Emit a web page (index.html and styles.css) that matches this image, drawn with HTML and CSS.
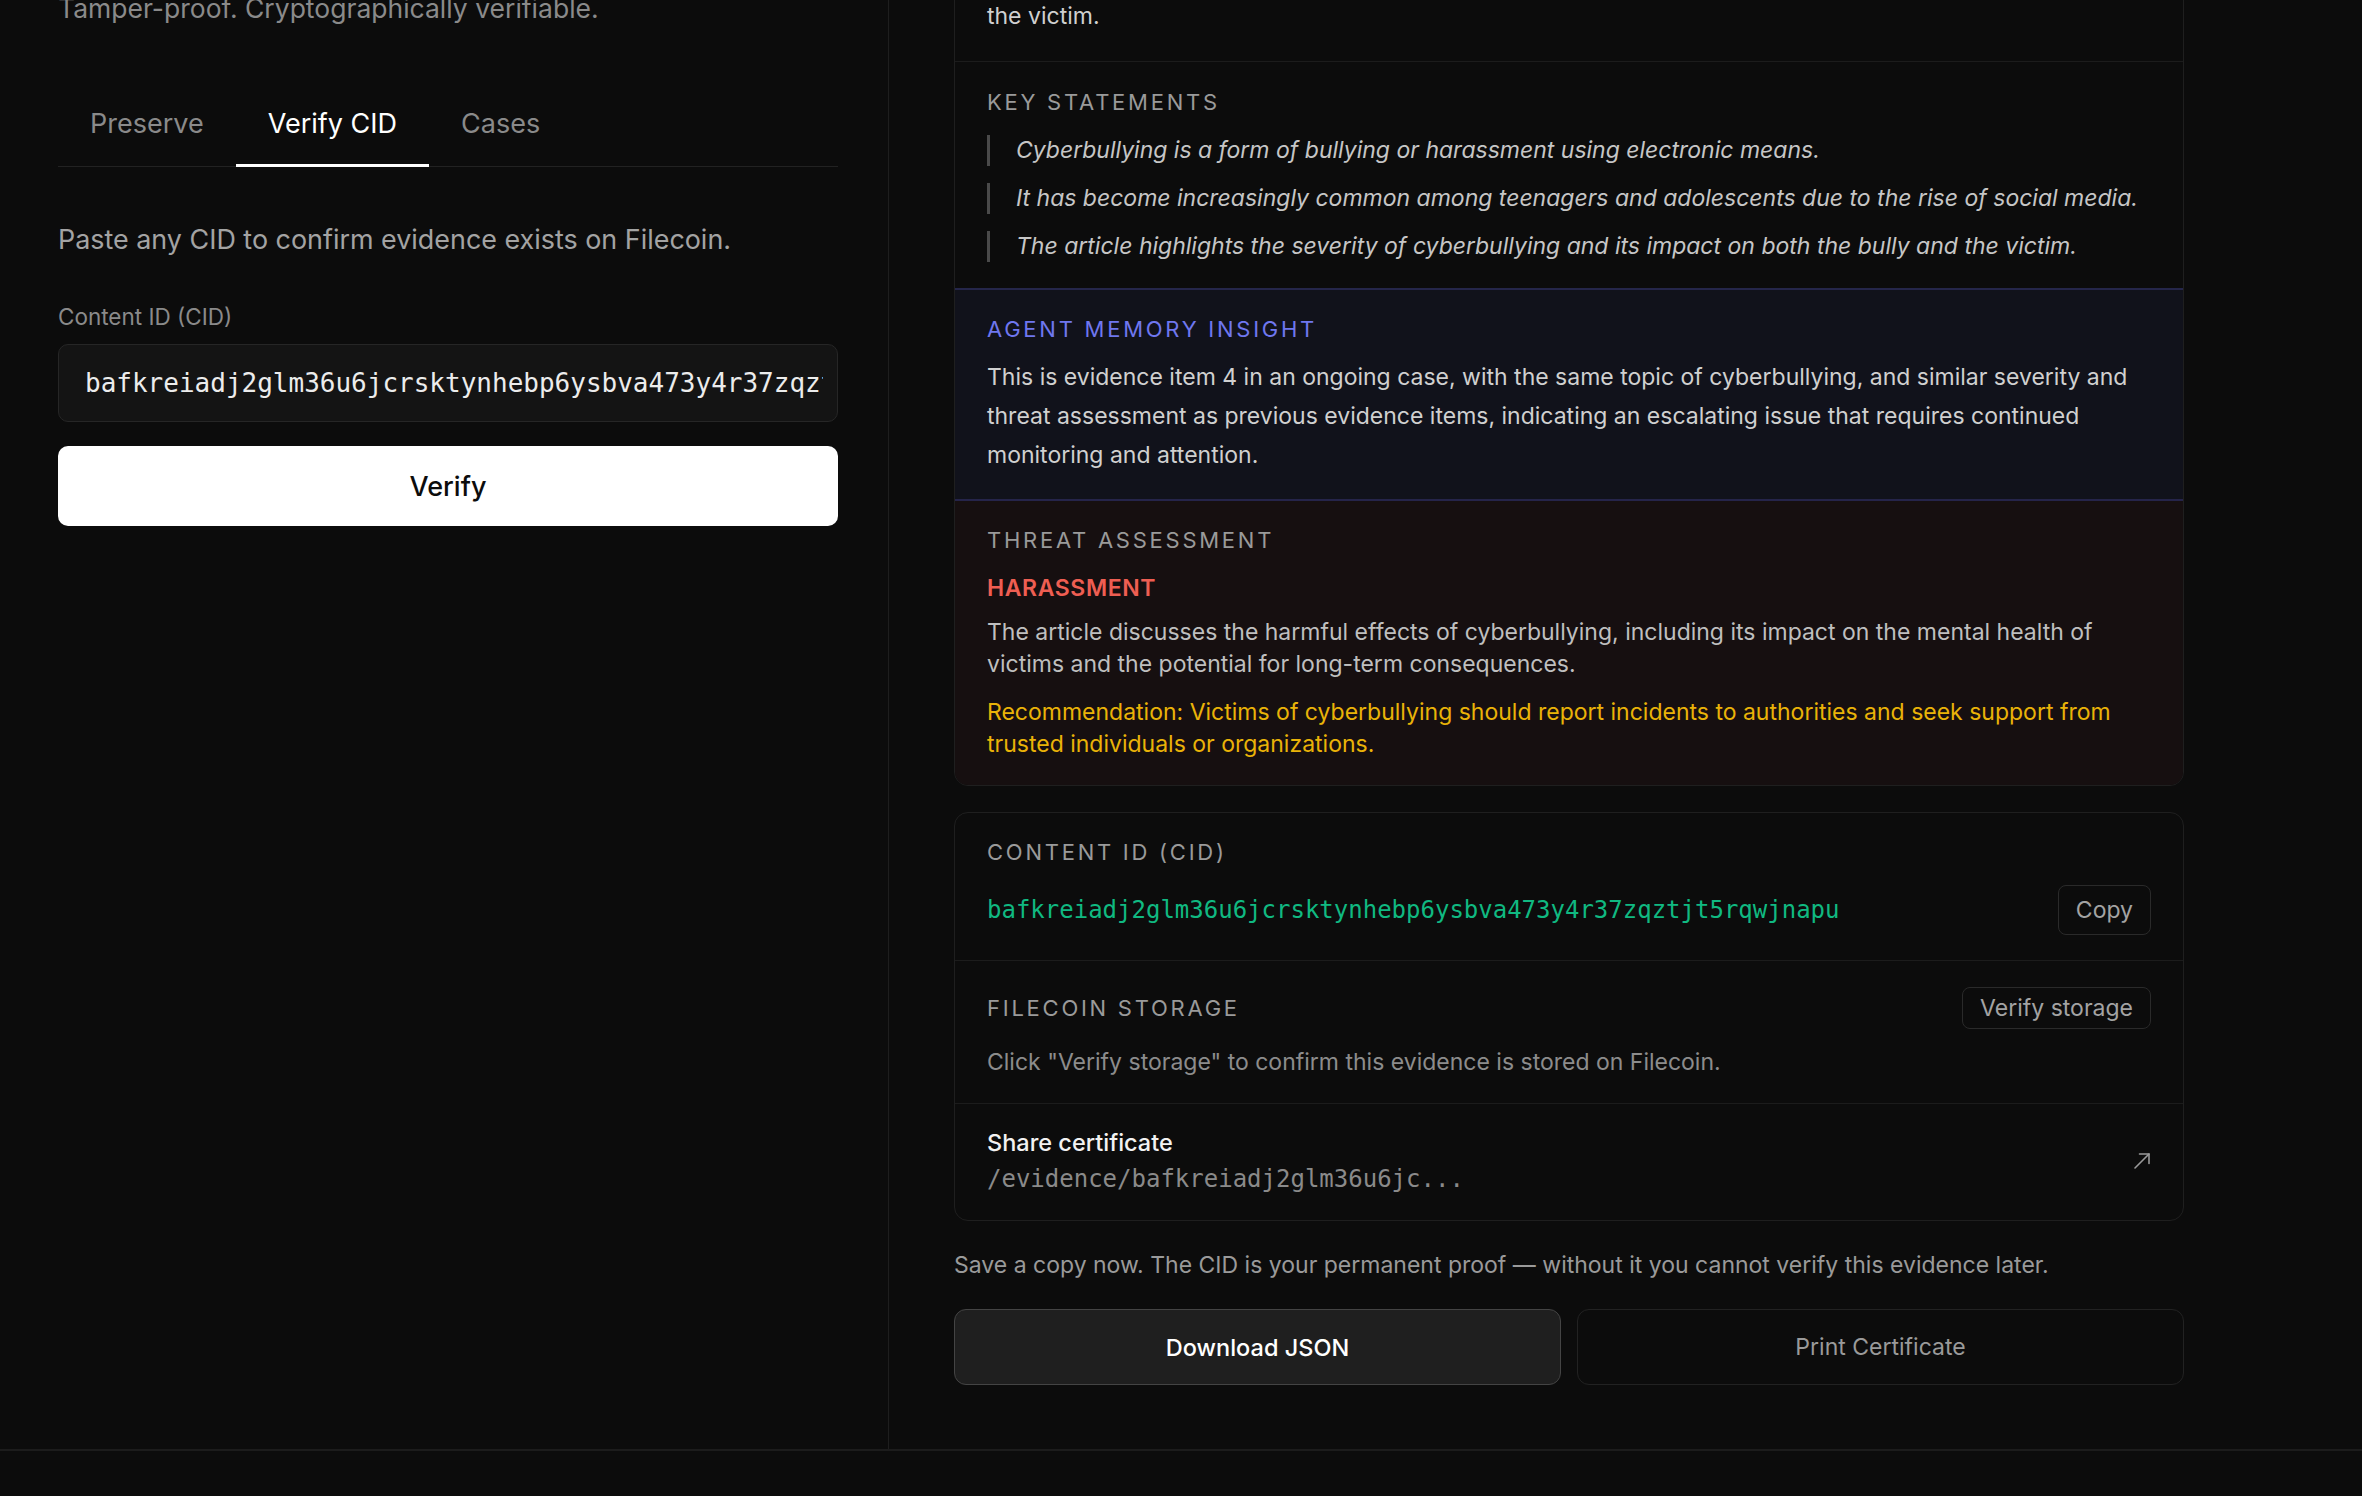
FILE: index.html
```html
<!DOCTYPE html>
<html lang="en">
<head>
    <meta charset="UTF-8">
    <title>Evidence Vault</title>
<link rel="stylesheet" href="styles.css">
</head>
<body>
    <div class="shell">
        <aside class="panel">
            <h1 class="panel-title">Evidence Vault</h1>
            <p class="panel-sub">Tamper-proof. Cryptographically verifiable.</p>
            <nav class="tabs">
                <a class="tab">Preserve</a>
                <a class="tab active">Verify CID</a>
                <a class="tab">Cases</a>
            </nav>
            <p class="hint">Paste any CID to confirm evidence exists on Filecoin.</p>
            <label class="field-label" for="cid">Content ID (CID)</label>
            <input type="text" id="cid" class="cid-input" value="bafkreiadj2glm36u6jcrsktynhebp6ysbva473y4r37zqztjt5rqwjnapu">
            <button class="btn-verify">Verify</button>
        </aside>

        <main class="result">
            <section class="card">
                <div class="block">
                    <h3 class="eyebrow">Summary</h3>
                    <p class="summary">The article discusses the severity of cyberbullying and its lasting impact on both the bully and<br>the victim.</p>
                </div>
                <div class="block">
                    <h3 class="eyebrow">Key Statements</h3>
                    <div class="statements">
                        <blockquote>Cyberbullying is a form of bullying or harassment using electronic means.</blockquote>
                        <blockquote>It has become increasingly common among teenagers and adolescents due to the rise of social media.</blockquote>
                        <blockquote>The article highlights the severity of cyberbullying and its impact on both the bully and the victim.</blockquote>
                    </div>
                </div>
                <div class="block memory">
                    <h3 class="eyebrow">Agent Memory Insight</h3>
                    <p class="memory-text">This is evidence item 4 in an ongoing case, with the same topic of cyberbullying, and similar severity and threat assessment as previous evidence items, indicating an escalating issue that requires continued monitoring and attention.</p>
                </div>
                <div class="block threat">
                    <h3 class="eyebrow">Threat Assessment</h3>
                    <div class="threat-level">HARASSMENT</div>
                    <p class="threat-text">The article discusses the harmful effects of cyberbullying, including its impact on the mental health of victims and the potential for long-term consequences.</p>
                    <p class="advice">Recommendation: Victims of cyberbullying should report incidents to authorities and seek support from trusted individuals or organizations.</p>
                </div>
            </section>

            <section class="card record">
                <div class="block">
                    <h3 class="eyebrow">Content ID (CID)</h3>
                    <div class="row">
                        <code class="cid">bafkreiadj2glm36u6jcrsktynhebp6ysbva473y4r37zqztjt5rqwjnapu</code>
                        <button class="btn-small copy">Copy</button>
                    </div>
                </div>
                <div class="block storage">
                    <div class="row">
                        <h3 class="eyebrow">Filecoin Storage</h3>
                        <button class="btn-small">Verify storage</button>
                    </div>
                    <p class="muted">Click "Verify storage" to confirm this evidence is stored on Filecoin.</p>
                </div>
                <a class="block share">
                    <div>
                        <div class="share-title">Share certificate</div>
                        <div class="share-path">/evidence/bafkreiadj2glm36u6jc...</div>
                    </div>
                    <svg class="share-icon" width="18" height="18" viewBox="0 0 18 18" fill="none" stroke="#9a9a9a" stroke-width="1.6" stroke-linecap="round" stroke-linejoin="round">
                        <path d="M2 16 L16 2"/>
                        <path d="M6.5 2 H16 V11.5"/>
                    </svg>
                </a>
            </section>

            <p class="note">Save a copy now. The CID is your permanent proof — without it you cannot verify this evidence later.</p>

            <div class="actions">
                <button class="btn-action primary">Download JSON</button>
                <button class="btn-action">Print Certificate</button>
            </div>
        </main>
    </div>
</body>
</html>
```

FILE: styles.css
```css
body{
    margin: 0;
    background-color: #0c0c0c;
    color: #e5e5e5;
    font-family: Inter, "Noto Sans", sans-serif;
}

/* page is shown scrolled down a bit */
.shell{
    display: grid;
    grid-template-columns: 889px 1fr;
    margin-top: -120px;
    border-bottom: 2px solid #1c1c1c;
}

/* left panel */
.panel{
    border-right: 1px solid #1e1e1e;
    padding: 60px 50px 0 58px;
}
.panel-title{
    margin: 0;
    font-size: 40px;
    line-height: 50px;
    font-weight: 600;
    color: #fff;
}
.panel-sub{
    margin: 0;
    font-size: 26.5px;
    line-height: 36px;
    color: #8a8a8a;
}
.tabs{
    display: flex;
    margin-top: 57px;
    border-bottom: 1px solid #222;
}
.tab{
    padding: 23px 32px 22px;
    font-size: 27px;
    line-height: 36px;
    color: #8a8a8a;
    border-bottom: 3px solid transparent;
    margin-bottom: -1px;
}
.tab.active{
    color: #fff;
    border-bottom-color: #fff;
}
.hint{
    margin: 54px 0 0;
    font-size: 26.9px;
    line-height: 36px;
    color: #a3a3a3;
}
.field-label{
    display: block;
    margin-top: 45px;
    font-size: 22.5px;
    line-height: 30px;
    color: #8a8a8a;
}
.cid-input{
    display: block;
    box-sizing: border-box;
    width: 100%;
    height: 78px;
    margin-top: 12px;
    padding: 0 14px 0 26px;
    background-color: #141414;
    border: 1px solid #262626;
    border-radius: 10px;
    color: #ececec;
    font-family: "DejaVu Sans Mono", monospace;
    font-size: 26px;
    outline: none;
}
.btn-verify{
    display: block;
    width: 100%;
    height: 80px;
    margin-top: 24px;
    background-color: #fff;
    color: #0c0c0c;
    border: 0;
    border-radius: 10px;
    font-family: Inter, sans-serif;
    font-size: 27px;
    font-weight: 500;
}

/* right side */
.result{
    width: 1230px;
    padding: 9px 0 64px 65px;
}
.card{
    border: 1px solid #1f1f1f;
    border-radius: 14px;
    overflow: hidden;
}
.block{
    display: block;
    padding: 24px 32px 25px;
}
.block + .block{
    border-top: 1px solid #1c1c1c;
}
.eyebrow{
    margin: 0;
    font-size: 22px;
    line-height: 30px;
    font-weight: 400;
    letter-spacing: 0.125em;
    text-transform: uppercase;
    color: #9a9a9a;
}
.summary{
    margin: 14px 0 0;
    font-size: 23px;
    line-height: 39px;
    color: #d0d0d0;
}
.block:nth-child(2){
    padding-top: 25px;
    padding-bottom: 26px;
}
.statements{
    display: grid;
    gap: 17px;
    margin-top: 18px;
}
blockquote{
    margin: 0;
    padding-left: 26px;
    border-left: 3px solid #4a4a4a;
    font-size: 23px;
    line-height: 31px;
    font-style: italic;
    color: #c6c6c6;
}

.block.memory{
    background-color: #11121b;
    border-top: 2px solid #25264a;
    padding-bottom: 24px;
}
.memory .eyebrow{
    color: #6f77ef;
}
.memory-text{
    margin: 14px 0 0;
    font-size: 23px;
    line-height: 39px;
    color: #d0d0d0;
}

.block.threat{
    background-color: #160f10;
    border-top: 2px solid #25244a;
}
.threat-level{
    margin-top: 18px;
    font-size: 23px;
    line-height: 30px;
    font-weight: 600;
    letter-spacing: 0.6px;
    color: #ee5e52;
}
.threat-text{
    margin: 13px 0 0;
    font-size: 23px;
    line-height: 32px;
    color: #bfbfbf;
}
.advice{
    margin: 16px 0 0;
    font-size: 23px;
    line-height: 32px;
    color: #eab308;
}

.record{
    margin-top: 26px;
}
.row{
    display: flex;
    align-items: center;
    justify-content: space-between;
}
.record .block:first-child .row{
    margin-top: 18px;
}
.cid{
    font-family: "DejaVu Sans Mono", monospace;
    font-size: 24px;
    color: #10b981;
}
.btn-small{
    padding: 5px 17px;
    background-color: transparent;
    border: 1px solid #2a2a2a;
    border-radius: 8px;
    color: #a3a3a3;
    font-family: Inter, sans-serif;
    font-size: 23px;
    line-height: 30px;
}
.btn-small.copy{
    padding: 9px 17px;
}
.block.storage{
    padding-top: 26px;
    padding-bottom: 26px;
}
.muted{
    margin: 18px 0 0;
    font-size: 23px;
    line-height: 30px;
    color: #8c8c8c;
}
.share{
    display: flex;
    align-items: center;
    justify-content: space-between;
    padding-bottom: 26px;
}
.share-title{
    font-size: 23.5px;
    line-height: 30px;
    font-weight: 500;
    color: #f2f2f2;
}
.share-path{
    margin-top: 6px;
    font-family: "DejaVu Sans Mono", monospace;
    font-size: 24px;
    line-height: 30px;
    color: #8a8a8a;
}

.note{
    margin: 29px 0 0;
    font-size: 23px;
    line-height: 30px;
    color: #9a9a9a;
}
.actions{
    display: grid;
    grid-template-columns: 1fr 1fr;
    gap: 16px;
    margin-top: 29px;
}
.btn-action{
    height: 76px;
    background-color: transparent;
    border: 1px solid #222;
    border-radius: 12px;
    color: #9a9a9a;
    font-family: Inter, sans-serif;
    font-size: 23px;
}
.btn-action.primary{
    background-color: #1f1f1f;
    border-color: #444;
    color: #fff;
    font-size: 23.5px;
    font-weight: 500;
}
```
